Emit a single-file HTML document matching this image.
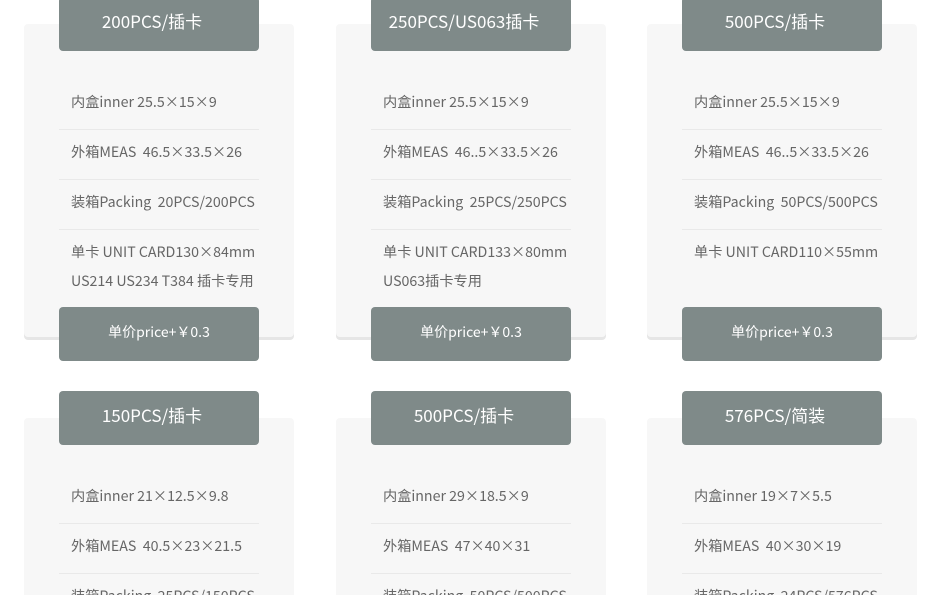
<!DOCTYPE html>
<html><head><meta charset="utf-8"><style>
*{margin:0;padding:0;box-sizing:border-box}
html,body{width:950px;height:595px;overflow:hidden}
body{background:#fff;font-family:"Liberation Sans","Noto Sans CJK SC",sans-serif;position:relative}
.card{position:absolute;width:270px;height:313px;background:#f7f7f7;border-radius:4px;box-shadow:0 3px 0 #e6e6e6}
.card.b{height:177px;border-radius:4px 4px 0 0;box-shadow:none}
.hd{position:absolute;width:200px;height:54px;background:#7f8a89;border-radius:4px;color:#fff;font-size:17px;text-align:center;line-height:48px;padding-right:14px;font-family:"Noto Sans CJK SC",sans-serif}
.pr{position:absolute;width:200px;height:54px;background:#7f8a89;border-radius:4px;color:#fff;font-size:14px;text-align:center;line-height:50px;font-family:"Noto Sans CJK SC",sans-serif}
.list{position:absolute;width:200px;font-family:"Noto Sans CJK SC",sans-serif;font-size:14.2px;color:#666;height:121px;overflow:hidden}
.list.t{height:auto}
.list div{height:50px;line-height:45px;padding-left:12px;border-bottom:1px solid #e9e9e9;white-space:nowrap}
.list div.last{border:none;line-height:29px;padding-top:8px;height:auto}
</style></head><body>

<div class="card" style="left:24px;top:24px"></div>
<div class="hd" style="left:59px;top:-3px">200PCS/插卡</div>
<div class="list t" style="left:59px;top:80px"><div>内盒inner 25.5×15×9</div><div>外箱MEAS&nbsp;&nbsp;46.5×33.5×26</div><div>装箱Packing&nbsp;&nbsp;20PCS/200PCS</div><div class="last">单卡 UNIT CARD130×84mm<br>US214 US234 T384 插卡专用</div></div>
<div class="pr" style="left:59px;top:307px">单价price+￥0.3</div>

<div class="card" style="left:336px;top:24px"></div>
<div class="hd" style="left:371px;top:-3px">250PCS/US063插卡</div>
<div class="list t" style="left:371px;top:80px"><div>内盒inner 25.5×15×9</div><div>外箱MEAS&nbsp;&nbsp;46..5×33.5×26</div><div>装箱Packing&nbsp;&nbsp;25PCS/250PCS</div><div class="last">单卡 UNIT CARD133×80mm<br>US063插卡专用</div></div>
<div class="pr" style="left:371px;top:307px">单价price+￥0.3</div>

<div class="card" style="left:647px;top:24px"></div>
<div class="hd" style="left:682px;top:-3px">500PCS/插卡</div>
<div class="list t" style="left:682px;top:80px"><div>内盒inner 25.5×15×9</div><div>外箱MEAS&nbsp;&nbsp;46..5×33.5×26</div><div>装箱Packing&nbsp;&nbsp;50PCS/500PCS</div><div class="last">单卡 UNIT CARD110×55mm</div></div>
<div class="pr" style="left:682px;top:307px">单价price+￥0.3</div>

<div class="card b" style="left:24px;top:418px"></div>
<div class="hd" style="left:59px;top:391px">150PCS/插卡</div>
<div class="list" style="left:59px;top:474px"><div>内盒inner 21×12.5×9.8</div><div>外箱MEAS&nbsp;&nbsp;40.5×23×21.5</div><div>装箱Packing&nbsp;&nbsp;25PCS/150PCS</div></div>

<div class="card b" style="left:336px;top:418px"></div>
<div class="hd" style="left:371px;top:391px">500PCS/插卡</div>
<div class="list" style="left:371px;top:474px"><div>内盒inner 29×18.5×9</div><div>外箱MEAS&nbsp;&nbsp;47×40×31</div><div>装箱Packing&nbsp;&nbsp;50PCS/500PCS</div></div>

<div class="card b" style="left:647px;top:418px"></div>
<div class="hd" style="left:682px;top:391px">576PCS/简装</div>
<div class="list" style="left:682px;top:474px"><div>内盒inner 19×7×5.5</div><div>外箱MEAS&nbsp;&nbsp;40×30×19</div><div>装箱Packing&nbsp;&nbsp;24PCS/576PCS</div></div>

</body></html>
